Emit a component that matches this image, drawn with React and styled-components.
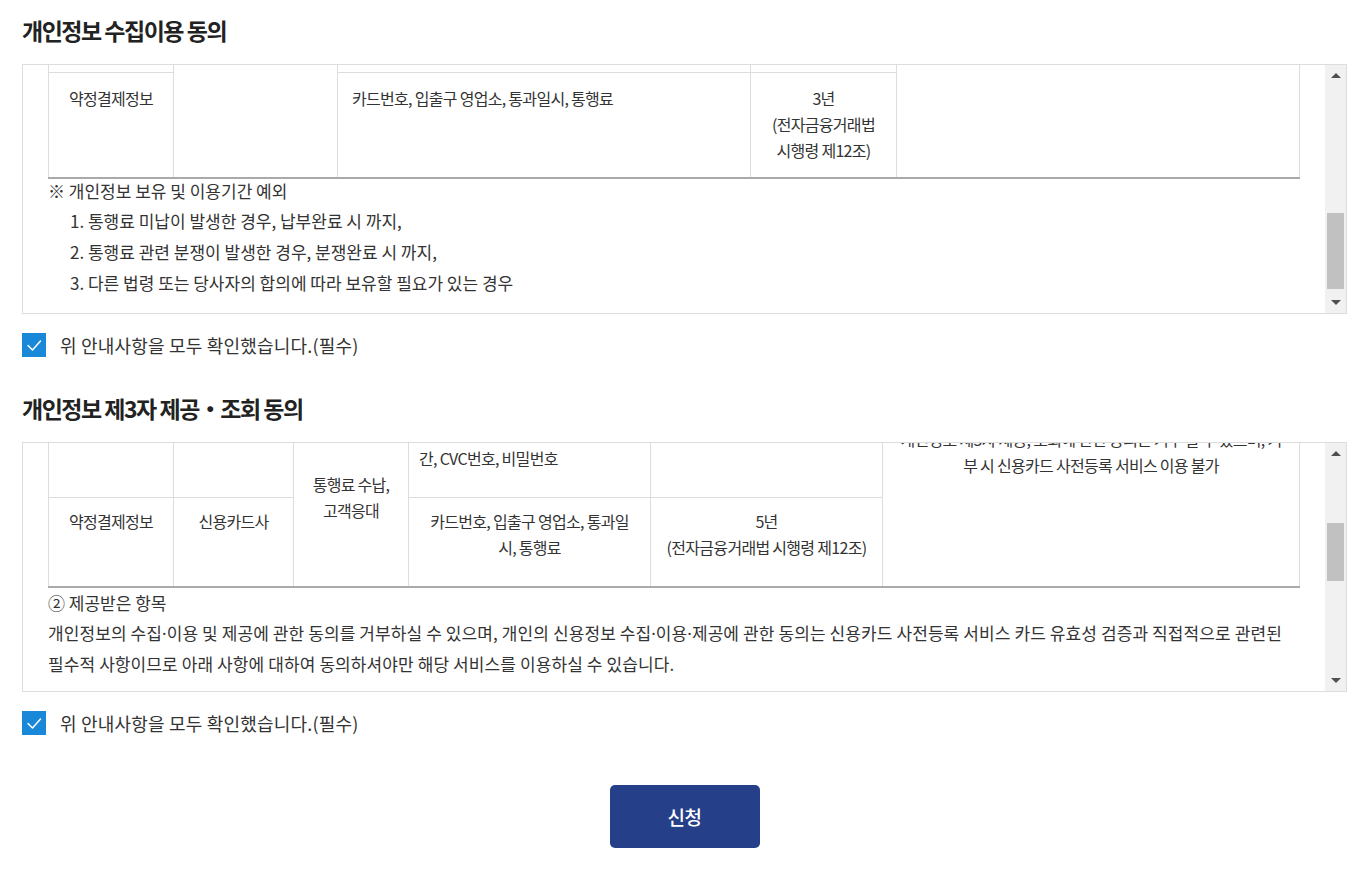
import React, { useLayoutEffect, useRef, useState } from "react";
import styled, { createGlobalStyle } from "styled-components";

const GlobalStyle = createGlobalStyle`
  html, body {
    margin: 0;
    padding: 0;
    background: #fff;
  }
  body {
    font-family: "Noto Sans CJK KR", "Noto Sans", sans-serif;
    color: #333;
  }
  * {
    box-sizing: border-box;
  }
`;

const ARROW = 21;

// scroll panel with a drawn scrollbar; the marked row is scrolled to `offset` px
const ScrollPanel = ({ offset, renderContent }) => {
  const viewRef = useRef(null);
  const markRef = useRef(null);
  const [thumb, setThumb] = useState({ top: 0, height: 0 });

  useLayoutEffect(() => {
    const view = viewRef.current;
    const mark = markRef.current;
    if (!view || !mark) return;
    view.scrollTop +=
      mark.getBoundingClientRect().top - view.getBoundingClientRect().top - offset;
    const track = view.clientHeight - ARROW * 2;
    const height = Math.max(
      20,
      Math.round((track * view.clientHeight) / view.scrollHeight)
    );
    const max = view.scrollHeight - view.clientHeight;
    const top = max > 0 ? Math.round(((track - height) * view.scrollTop) / max) : 0;
    setThumb({ top, height });
  }, [offset]);

  return (
    <Frame>
      <Viewport ref={viewRef}>{renderContent(markRef)}</Viewport>
      <Bar>
        <ArrowButton>
          <ArrowUp />
        </ArrowButton>
        <Track>
          <Thumb style={{ top: thumb.top, height: thumb.height }} />
        </Track>
        <ArrowButton>
          <ArrowDown />
        </ArrowButton>
      </Bar>
    </Frame>
  );
};

const Check = () => (
  <svg width="24" height="24" viewBox="0 0 24 24" fill="none">
    <polyline
      points="6,12.5 10.5,17 18.5,8"
      stroke="#fff"
      strokeWidth="1.5"
      strokeLinecap="round"
      strokeLinejoin="round"
    />
  </svg>
);

const Agree = () => (
  <AgreeRow>
    <CheckBox>
      <Check />
    </CheckBox>
    <AgreeLabel>위 안내사항을 모두 확인했습니다.(필수)</AgreeLabel>
  </AgreeRow>
);

const D = () => <Dot>·</Dot>;

const CollectContent = (markRef) => (
  <BoxInner $top={20} $bottom={25}>
    <Para>
      한국도로공사는 「개인정보 보호법」 제15조 및 제22조에 따라 신용카드 사전등록 서비스 제공을 위하여
      아래와 같이 개인정보를 수집
      <D />
      이용하고자 합니다.
      <br />
      수집된 개인정보는 아래의 목적 이외의 용도로는 이용되지 않으며, 이용 목적이 변경되는 경우에는 별도의
      동의를 받는 등 필요한 조치를 이행할 예정입니다.
    </Para>
    <Para>내용을 자세히 읽으신 후 동의 여부를 결정하여 주십시오.</Para>
    <SubTitle $gap={8}>
      ① 수집
      <D />
      이용 항목
    </SubTitle>
    <Table>
      <colgroup>
        <col style={{ width: 125 }} />
        <col style={{ width: 164 }} />
        <col style={{ width: 413 }} />
        <col style={{ width: 146 }} />
        <col style={{ width: 403 }} />
      </colgroup>
      <thead>
        <tr>
          <Th>구분</Th>
          <Th>
            수집
            <D />
            이용 목적
          </Th>
          <Th>
            수집
            <D />
            이용 항목
          </Th>
          <Th>보유 및 이용기간</Th>
          <Th>동의 거부 권리 및 불이익</Th>
        </tr>
      </thead>
      <tbody>
        <tr>
          <Td>회원정보</Td>
          <Td rowSpan={5}>신용카드 사전등록 서비스 제공, 통행료 자동결제, 고객응대</Td>
          <Td $align="left">성명, 생년월일, 휴대폰번호, 이메일</Td>
          <Td>회원 탈퇴 시 까지</Td>
          <Td rowSpan={5}>
            개인정보 수집
            <D />
            이용에 관한 동의는 거부 할 수 있으며, 거부 시 신용카드 사전등록 서비스 이용 불가
          </Td>
        </tr>
        <tr>
          <Td>주소정보</Td>
          <Td $align="left">우편번호, 주소</Td>
          <Td>회원 탈퇴 시 까지</Td>
        </tr>
        <tr>
          <Td>차량정보</Td>
          <Td $align="left">차량번호, 차종</Td>
          <Td>회원 탈퇴 시 까지</Td>
        </tr>
        <tr>
          <Td>카드정보</Td>
          <Td $align="left">카드번호, 유효기간, CVC번호, 비밀번호</Td>
          <Td>회원 탈퇴 시 까지</Td>
        </tr>
        <tr ref={markRef}>
          <Td>약정결제정보</Td>
          <Td $align="left">카드번호, 입출구 영업소, 통과일시, 통행료</Td>
          <Td $nowrap>
            3년
            <br />
            (전자금융거래법
            <br />
            시행령 제12조)
          </Td>
        </tr>
      </tbody>
    </Table>
    <NoteTitle>※ 개인정보 보유 및 이용기간 예외</NoteTitle>
    <NoteList>
      <NoteItem>1. 통행료 미납이 발생한 경우, 납부완료 시 까지,</NoteItem>
      <NoteItem>2. 통행료 관련 분쟁이 발생한 경우, 분쟁완료 시 까지,</NoteItem>
      <NoteItem>3. 다른 법령 또는 당사자의 합의에 따라 보유할 필요가 있는 경우</NoteItem>
    </NoteList>
  </BoxInner>
);

const ProvideContent = (markRef) => (
  <BoxInner $top={10} $bottom={86}>
    <Para>개인정보 제3자 제공 내역은 다음과 같습니다.</Para>
    <SubTitle>① 제공받는 자 및 제공 목적</SubTitle>
    <Table>
      <colgroup>
        <col style={{ width: 125 }} />
        <col style={{ width: 120 }} />
        <col style={{ width: 115 }} />
        <col style={{ width: 242 }} />
        <col style={{ width: 232 }} />
        <col style={{ width: 417 }} />
      </colgroup>
      <thead>
        <tr>
          <Th>구분</Th>
          <Th>제공받는 자</Th>
          <Th>제공 목적</Th>
          <Th>제공 항목</Th>
          <Th>보유 및 이용기간</Th>
          <Th>동의 거부 권리 및 불이익</Th>
        </tr>
      </thead>
      <tbody>
        <tr>
          <Td $tight>회원정보</Td>
          <Td $tight>한국도로공사</Td>
          <Td $tight>본인확인</Td>
          <Td $tight $align="left">성명, 휴대폰번호, 차량번호</Td>
          <Td $tight>회원 탈퇴 시 까지</Td>
          <Td $tight $nowrap>
            개인정보 제3자 제공에 관한 동의는 거부 할 수 있으며,
            <br />
            거부 시 서비스 이용 불가
          </Td>
        </tr>
        <tr>
          <Td $tight>카드정보</Td>
          <Td $tight>신용카드사</Td>
          <Td rowSpan={2} $valign="middle" $nowrap>
            통행료 수납,
            <br />
            고객응대
          </Td>
          <Td $tight $align="left" $nowrap>
            신용카드정보(카드번호, 유효기
            <br />
            간, CVC번호, 비밀번호
          </Td>
          <Td $tight>서비스 해지 시 까지</Td>
          <Td rowSpan={2} $top={17} $nowrap>
            개인정보 제3자 제공, 조회에 관한 동의는 거부 할 수 있으며, 거
            <br />
            부 시 신용카드 사전등록 서비스 이용 불가
          </Td>
        </tr>
        <tr ref={markRef}>
          <Td $tight>약정결제정보</Td>
          <Td $tight>신용카드사</Td>
          <Td $tight $nowrap>
            카드번호, 입출구 영업소, 통과일
            <br />
            시, 통행료
          </Td>
          <Td $tight $nowrap>
            5년
            <br />
            (전자금융거래법 시행령 제12조)
          </Td>
        </tr>
      </tbody>
    </Table>
    <SubTitle>② 제공받은 항목</SubTitle>
    <Para>
      개인정보의 수집
      <D />
      이용 및 제공에 관한 동의를 거부하실 수 있으며, 개인의 신용정보 수집
      <D />
      이용
      <D />
      제공에 관한 동의는 신용카드 사전등록 서비스 카드 유효성 검증과 직접적으로 관련된
      <br />
      필수적 사항이므로 아래 사항에 대하여 동의하셔야만 해당 서비스를 이용하실 수 있습니다.
    </Para>
    <SubTitle $gap={24}>③ 제공받는 자의 개인정보 보유 및 이용기간</SubTitle>
    <Para>
      제공받는 자는 제공 목적이 달성된 후에는 해당 정보를 지체 없이 파기합니다.
      <br />
      다만, 관계 법령에 따라 보존할 필요가 있는 경우에는 해당 법령에서 정한 기간 동안 보관합니다.
    </Para>
    <SubTitle $gap={12}>④ 동의를 거부할 권리 및 동의 거부에 따른 불이익</SubTitle>
    <Para>
      귀하는 개인정보 제3자 제공
      <D />
      조회에 대한 동의를 거부할 권리가 있습니다.
      <br />
      다만, 동의를 거부하실 경우 신용카드 사전등록 서비스를 이용하실 수 없습니다.
    </Para>
    <Para>기타 개인정보 처리에 관한 사항은 한국도로공사 개인정보 처리방침을 참고하여 주시기 바랍니다.</Para>
    <Para>문의 : 한국도로공사 고객센터 1588-2504</Para>
    <Para>운영시간 : 평일 09:00 ~ 18:00 (주말 및 공휴일 휴무)</Para>
  </BoxInner>
);

export default function App() {
  return (
    <>
      <GlobalStyle />
      <Page>
        <Section>
          <SectionTitle>개인정보 수집이용 동의</SectionTitle>
          <ScrollPanel offset={8} renderContent={CollectContent} />
          <Agree />
        </Section>
        <Section>
          <SectionTitle>개인정보 제3자 제공・조회 동의</SectionTitle>
          <ScrollPanel offset={55} renderContent={ProvideContent} />
          <Agree />
        </Section>
        <ButtonRow>
          <SubmitButton type="button">신청</SubmitButton>
        </ButtonRow>
      </Page>
    </>
  );
}

const Page = styled.div`
  width: 1357px;
  padding: 16px 10px 46px 22px;
  display: flex;
  flex-direction: column;
`;

const Section = styled.section`
  display: flex;
  flex-direction: column;
  & + & {
    margin-top: 37px;
  }
`;

const SectionTitle = styled.h2`
  margin: 0 0 19px;
  font-size: 23px;
  line-height: 29px;
  font-weight: 700;
  letter-spacing: -1.5px;
  color: #222;
`;

const Frame = styled.div`
  height: 250px;
  border: 1px solid #ddd;
  display: flex;
  background: #fff;
`;

const Viewport = styled.div`
  flex: 1;
  min-width: 0;
  overflow-y: auto;
  scrollbar-width: none;
  &::-webkit-scrollbar {
    display: none;
  }
`;

const Bar = styled.div`
  width: 21px;
  flex: none;
  display: flex;
  flex-direction: column;
  background: #f1f1f1;
`;

const ArrowButton = styled.div`
  height: ${ARROW}px;
  flex: none;
  display: flex;
  align-items: center;
  justify-content: center;
`;

const ArrowUp = styled.span`
  width: 0;
  height: 0;
  border-left: 5px solid transparent;
  border-right: 5px solid transparent;
  border-bottom: 5px solid #505050;
`;

const ArrowDown = styled.span`
  width: 0;
  height: 0;
  border-left: 5px solid transparent;
  border-right: 5px solid transparent;
  border-top: 5px solid #505050;
`;

const Track = styled.div`
  flex: 1;
  position: relative;
`;

const Thumb = styled.div`
  position: absolute;
  left: 2px;
  right: 2px;
  background: #c1c1c1;
`;

const BoxInner = styled.div`
  padding: ${(p) => p.$top}px 26px ${(p) => p.$bottom}px 25px;
`;

const Dot = styled.span`
  font-family: "Noto Sans", "Liberation Sans", sans-serif;
  letter-spacing: 0;
`;

const Para = styled.p`
  margin: 0;
  font-size: 17px;
  line-height: 30px;
  letter-spacing: 0.1px;
  color: #333;
`;

const SubTitle = styled.p`
  margin: ${(p) => p.$gap || 0}px 0 0;
  font-size: 17px;
  line-height: 30px;
  letter-spacing: 0;
  color: #333;
`;

const Table = styled.table`
  width: 100%;
  table-layout: fixed;
  border-collapse: collapse;
  border-top: 2px solid #555;
  border-bottom: 2px solid #aaa;
  margin-top: 6px;
`;

const Th = styled.th`
  border: 1px solid #ddd;
  border-top: 0;
  background: #f7f7f7;
  padding: 12px 10px;
  font-size: 16px;
  line-height: 26px;
  letter-spacing: -0.7px;
  font-weight: 500;
  color: #333;
`;

const Td = styled.td`
  border: 1px solid #ddd;
  padding: ${(p) =>
    p.$top ? `${p.$top}px 10px 10px` : p.$tight ? "10px 10px 26px" : "12px 14px 14px"};
  font-size: 16px;
  line-height: 26px;
  letter-spacing: -0.7px;
  color: #333;
  text-align: ${(p) => p.$align || "center"};
  vertical-align: ${(p) => p.$valign || "top"};
  white-space: ${(p) => (p.$nowrap ? "nowrap" : "normal")};
`;

const NoteTitle = styled.p`
  margin: 0;
  font-size: 17px;
  line-height: 24px;
  letter-spacing: 0;
  color: #333;
`;

const NoteList = styled.ul`
  list-style: none;
  margin: 2px 0 0;
  padding: 0 0 0 22px;
`;

const NoteItem = styled.li`
  font-size: 17px;
  line-height: 31px;
  letter-spacing: 0;
  color: #333;
`;

const AgreeRow = styled.label`
  display: flex;
  align-items: center;
  gap: 14px;
  margin-top: 19px;
  height: 24px;
`;

const CheckBox = styled.span`
  width: 24px;
  height: 24px;
  flex: none;
  display: flex;
  align-items: center;
  justify-content: center;
  background: #1a88d9;
`;

const AgreeLabel = styled.span`
  font-size: 18px;
  line-height: 24px;
  letter-spacing: 0.2px;
  color: #333;
`;

const ButtonRow = styled.div`
  display: flex;
  justify-content: center;
  margin-top: 50px;
`;

const SubmitButton = styled.button`
  width: 150px;
  height: 63px;
  border: 0;
  border-radius: 5px;
  background: #253f89;
  color: #fff;
  font-family: "Noto Sans CJK KR", "Noto Sans", sans-serif;
  font-size: 19px;
  font-weight: 500;
  letter-spacing: -0.5px;
  cursor: pointer;
`;
